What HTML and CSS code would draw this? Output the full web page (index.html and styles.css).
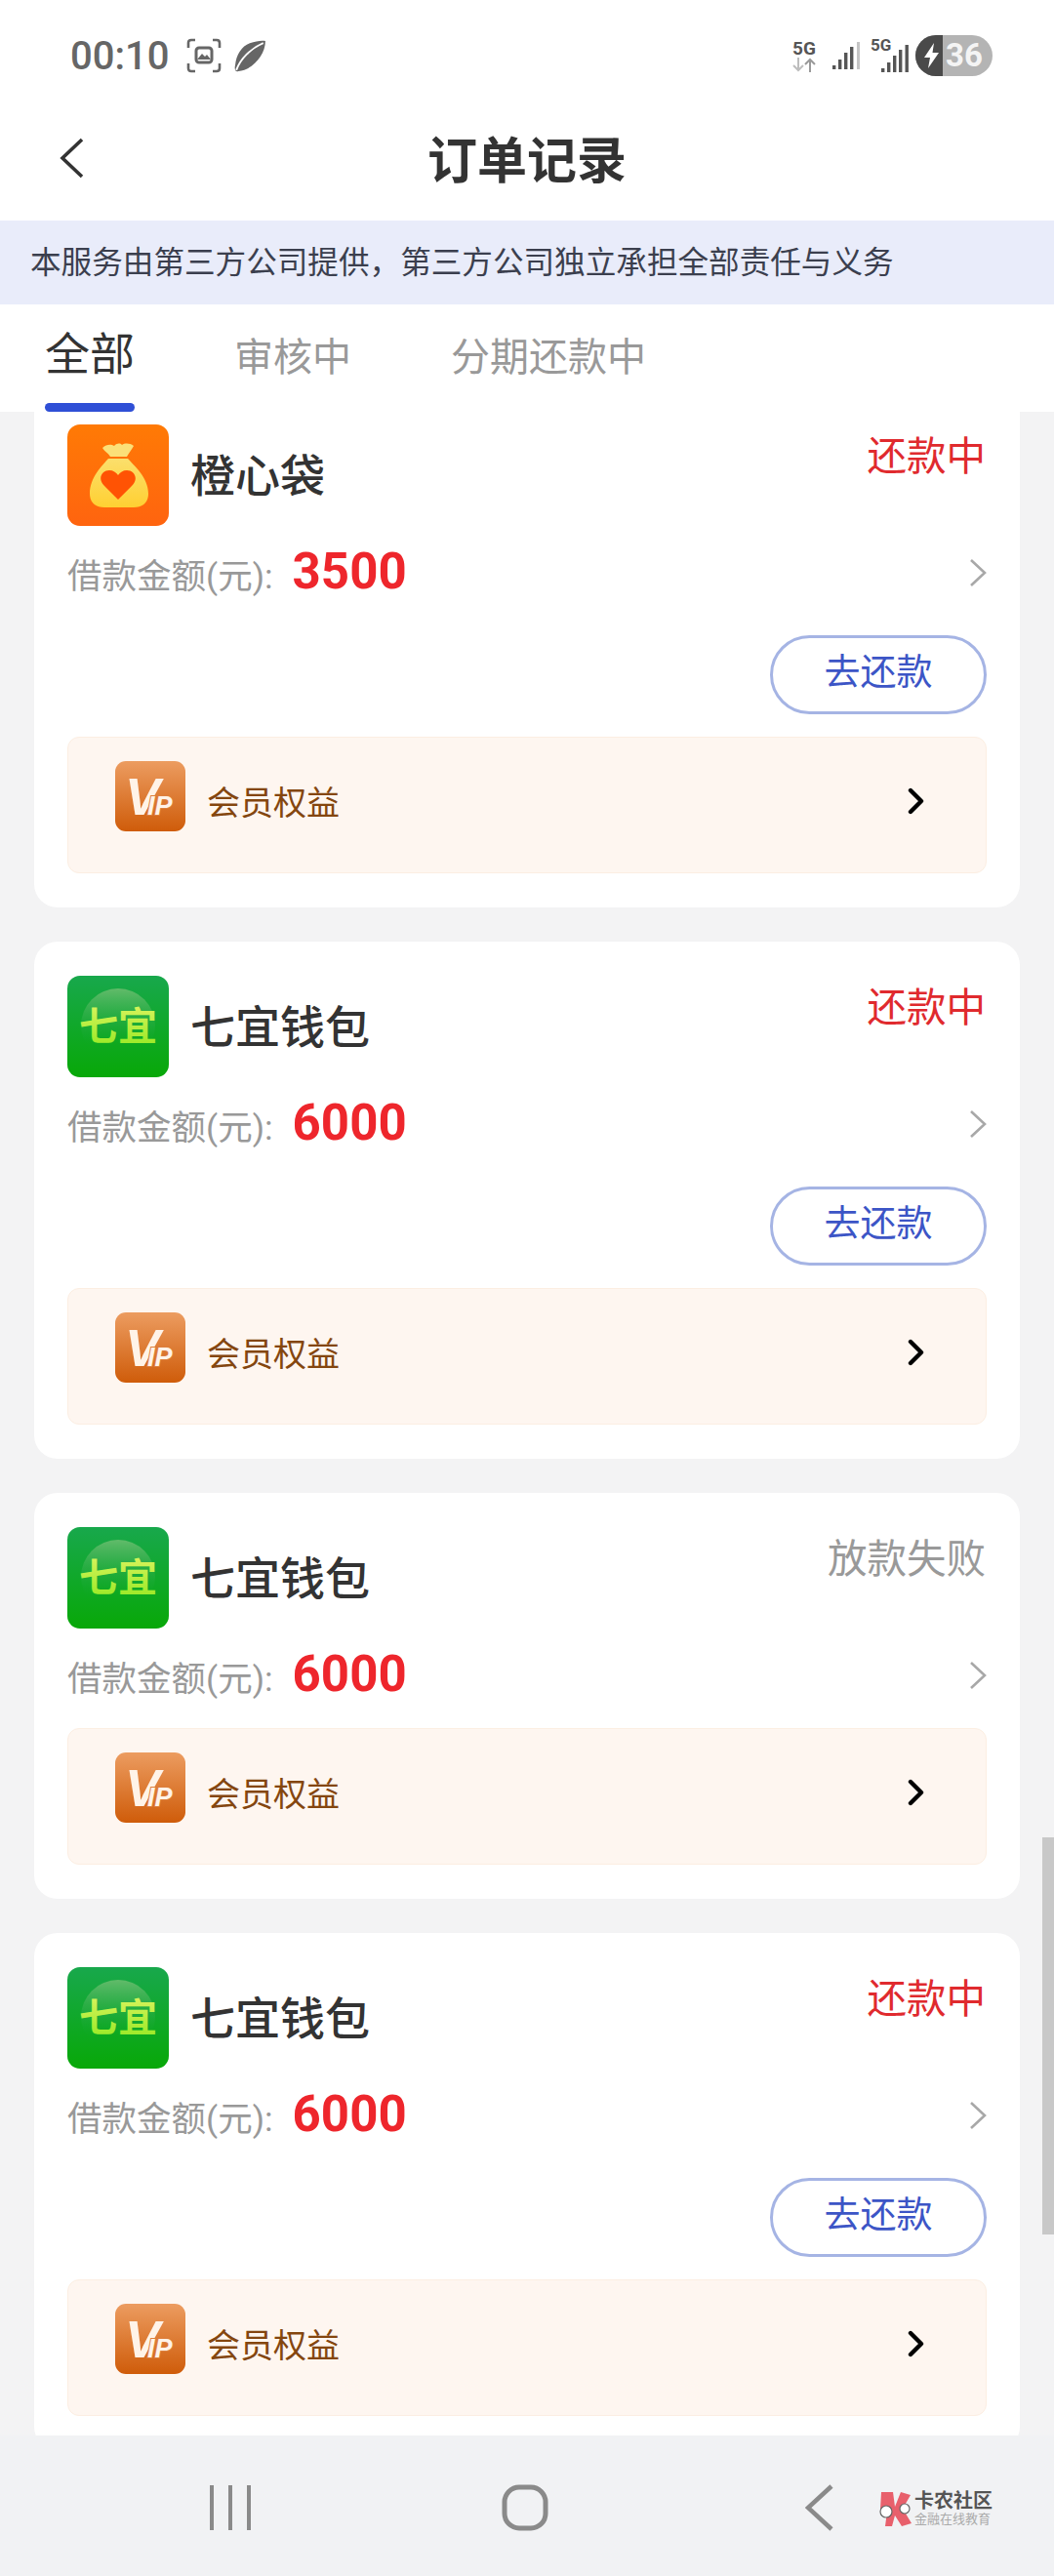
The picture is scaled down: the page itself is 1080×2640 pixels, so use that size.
FILE: index.html
```html
<!DOCTYPE html>
<html lang="zh-CN">
<head>
  <meta charset="UTF-8" />
  <meta name="viewport" content="width=device-width, initial-scale=1.0"/>
  <title>订单记录</title>
  <link rel="stylesheet" href="styles.css">
</head>
<body>

  <svg class="sprites" aria-hidden="true">
    <defs>
      <linearGradient id="bagBg" x1="0" y1="0" x2="0" y2="1">
        <stop offset="0" stop-color="#ff7a05"/>
        <stop offset="1" stop-color="#ff640f"/>
      </linearGradient>
      <linearGradient id="bagBody" x1="0" y1="0" x2="0" y2="1">
        <stop offset="0" stop-color="#fbdf6c"/>
        <stop offset="1" stop-color="#ffd032"/>
      </linearGradient>
      <linearGradient id="qiyiBg" x1="0" y1="0" x2="0" y2="1">
        <stop offset="0" stop-color="#18a84c"/>
        <stop offset="1" stop-color="#08a808"/>
      </linearGradient>
      <linearGradient id="qiyiGlow" x1="0" y1="0" x2="0" y2="1">
        <stop offset="0" stop-color="#62bb6a"/>
        <stop offset=".75" stop-color="#18a83c" stop-opacity="0"/>
      </linearGradient>
      <linearGradient id="qiyiText" x1="0" y1="0" x2="0" y2="1">
        <stop offset="0" stop-color="#e8f56a"/>
        <stop offset="1" stop-color="#90e81e"/>
      </linearGradient>
      <linearGradient id="vipBg" x1="0" y1="0" x2="0" y2="1">
        <stop offset="0" stop-color="#ec9c60"/>
        <stop offset="1" stop-color="#cf5c0a"/>
      </linearGradient>
    </defs>

    <symbol id="icon-bag" viewBox="0 0 104 104">
      <rect width="104" height="104" rx="13" fill="url(#bagBg)"/>
      <path d="M36 24c4-4 9-4 12-2 3-3 6-3 8-1 3-2 8-2 12 1-2 4-5 7-7 11H44c-2-4-6-5-8-9z" fill="#fbe078"/>
      <path d="M42 35h20c6 7 21 19 21 36 0 9-6 14-15 14H38c-9 0-15-5-15-14 0-17 13-29 19-36z" fill="url(#bagBody)"/>
      <path d="M52 77 38 63c-8-8-2-16 5-16 4 0 7 2 9 5 2-3 5-5 9-5 7 0 13 8 5 16z" fill="#ff5304"/>
    </symbol>

    <symbol id="icon-qiyi" viewBox="0 0 104 104">
      <rect width="104" height="104" rx="13" fill="url(#qiyiBg)"/>
      <circle cx="52" cy="51" r="38" fill="url(#qiyiGlow)"/>
    </symbol>

    <symbol id="icon-vip" viewBox="0 0 72 72">
      <rect width="72" height="72" rx="11" fill="url(#vipBg)"/>
    </symbol>

    <symbol id="icon-more" viewBox="0 0 18 30">
      <path d="M2 2l14 13L2 28" fill="none" stroke="#a8a8a8" stroke-width="2.6"/>
    </symbol>

    <symbol id="icon-go" viewBox="0 0 18 28">
      <path d="M3 3l11 11L3 25" fill="none" stroke="#000" stroke-width="4.4" stroke-linecap="round" stroke-linejoin="round"/>
    </symbol>
  </svg>

  <div class="status-bar">
    <div class="status-left">
      <span class="time">00:10</span>
      <svg class="shot-icon" viewBox="0 0 36 36">
        <path d="M9 2H5Q2 2 2 5v5M27 2h4q3 0 3 3v5M9 34H5q-3 0-3-3v-5M27 34h4q3 0 3-3v-5" fill="none" stroke="#666" stroke-width="2.6"/>
        <rect x="10" y="10" width="16" height="15" rx="3" fill="none" stroke="#666" stroke-width="3"/>
        <path d="M11 22l5-6 3 3 2-2 4 5z" fill="#666"/>
      </svg>
      <svg class="leaf-icon" viewBox="0 0 31 31">
        <path d="M30 1C27 0 21 1 15 3 7 6 2 14 1 24c-1 4 0 7 3 6C18 29 30 14 30 1z" fill="#666"/>
        <path d="M2 29C6 18 16 8 28 3" fill="none" stroke="#fff" stroke-width="1.800"/>
      </svg>
    </div>
    <div class="status-right">
      <div class="net">
        <span class="net-label">5G</span>
        <svg class="net-arrows" viewBox="0 0 26 15">
          <path d="M7 0v13M2 8l5 5 5-5" fill="none" stroke="#bdbdbd" stroke-width="2"/>
          <path d="M19 15V2M14 7l5-5 5 5" fill="none" stroke="#9a9a9a" stroke-width="2"/>
        </svg>
      </div>
      <svg class="signal" viewBox="0 0 28 28">
        <rect x="0" y="24" width="3.400" height="4" fill="#555"/>
        <rect x="6" y="18" width="3.400" height="10" fill="#555"/>
        <rect x="12" y="11" width="3.400" height="17" fill="#555"/>
        <rect x="18" y="5" width="3.400" height="23" fill="#555"/>
        <rect x="25" y="0" width="3" height="28" fill="#c4c4c4"/>
      </svg>
      <div class="signal-two">
        <span class="net-label net-label-small">5G</span>
        <svg class="signal signal-small" viewBox="0 0 28 28">
          <rect x="0" y="24" width="3.400" height="4" fill="#555"/>
          <rect x="6" y="18" width="3.400" height="10" fill="#555"/>
          <rect x="12" y="11" width="3.400" height="17" fill="#555"/>
          <rect x="18" y="5" width="3.400" height="23" fill="#555"/>
          <rect x="24.500" y="0" width="3.400" height="28" fill="#555"/>
        </svg>
      </div>
      <div class="battery">
        <div class="battery-bolt">
          <svg viewBox="0 0 16 26">
            <path d="M10 0 0 15h6l-2 11L15 10H8.500z" fill="#fff"/>
          </svg>
        </div>
        <div class="battery-level">36</div>
      </div>
    </div>
  </div>

  <div class="title-bar">
    <svg class="back" viewBox="0 0 25 42">
      <path d="M23 2 3 21l20 19" fill="none" stroke="#333" stroke-width="3.600"/>
    </svg>
    <h1>订单记录</h1>
  </div>

  <div class="notice">本服务由第三方公司提供，第三方公司独立承担全部责任与义务</div>

  <div class="tabs">
    <div class="tab active">全部</div>
    <div class="tab">审核中</div>
    <div class="tab">分期还款中</div>
  </div>

  <main class="list">
    <div class="order">
      <div class="order-head">
        <svg class="app-icon"><use href="#icon-bag"/></svg>
        <div class="app-name">橙心袋</div>
        <div class="status repaying">还款中</div>
      </div>
      <div class="amount-row">
        <span class="amount-label">借款金额(元):</span>
        <span class="amount">3500</span>
        <svg class="more"><use href="#icon-more"/></svg>
      </div>
      <div class="actions"><button class="pay-btn">去还款</button></div>
      <div class="vip-row">
        <svg class="vip-icon" viewBox="0 0 72 72"><use href="#icon-vip"/><text x="10" y="55" class="vip-v">V</text><text x="33" y="55" class="vip-ip">IP</text></svg>
        <span class="vip-text">会员权益</span>
        <svg class="go"><use href="#icon-go"/></svg>
      </div>
    </div>

    <div class="order">
      <div class="order-head">
        <svg class="app-icon" viewBox="0 0 104 104"><use href="#icon-qiyi"/><text x="52" y="66" class="qiyi-text">七宜</text></svg>
        <div class="app-name">七宜钱包</div>
        <div class="status repaying">还款中</div>
      </div>
      <div class="amount-row">
        <span class="amount-label">借款金额(元):</span>
        <span class="amount">6000</span>
        <svg class="more"><use href="#icon-more"/></svg>
      </div>
      <div class="actions"><button class="pay-btn">去还款</button></div>
      <div class="vip-row">
        <svg class="vip-icon" viewBox="0 0 72 72"><use href="#icon-vip"/><text x="10" y="55" class="vip-v">V</text><text x="33" y="55" class="vip-ip">IP</text></svg>
        <span class="vip-text">会员权益</span>
        <svg class="go"><use href="#icon-go"/></svg>
      </div>
    </div>

    <div class="order">
      <div class="order-head">
        <svg class="app-icon" viewBox="0 0 104 104"><use href="#icon-qiyi"/><text x="52" y="66" class="qiyi-text">七宜</text></svg>
        <div class="app-name">七宜钱包</div>
        <div class="status failed">放款失败</div>
      </div>
      <div class="amount-row">
        <span class="amount-label">借款金额(元):</span>
        <span class="amount">6000</span>
        <svg class="more"><use href="#icon-more"/></svg>
      </div>
      <div class="vip-row">
        <svg class="vip-icon" viewBox="0 0 72 72"><use href="#icon-vip"/><text x="10" y="55" class="vip-v">V</text><text x="33" y="55" class="vip-ip">IP</text></svg>
        <span class="vip-text">会员权益</span>
        <svg class="go"><use href="#icon-go"/></svg>
      </div>
    </div>

    <div class="order">
      <div class="order-head">
        <svg class="app-icon" viewBox="0 0 104 104"><use href="#icon-qiyi"/><text x="52" y="66" class="qiyi-text">七宜</text></svg>
        <div class="app-name">七宜钱包</div>
        <div class="status repaying">还款中</div>
      </div>
      <div class="amount-row">
        <span class="amount-label">借款金额(元):</span>
        <span class="amount">6000</span>
        <svg class="more"><use href="#icon-more"/></svg>
      </div>
      <div class="actions"><button class="pay-btn">去还款</button></div>
      <div class="vip-row">
        <svg class="vip-icon" viewBox="0 0 72 72"><use href="#icon-vip"/><text x="10" y="55" class="vip-v">V</text><text x="33" y="55" class="vip-ip">IP</text></svg>
        <span class="vip-text">会员权益</span>
        <svg class="go"><use href="#icon-go"/></svg>
      </div>
    </div>

    <div class="scroll-thumb"></div>
  </main>

  <nav class="nav-bar">
    <div class="nav-slot">
      <svg class="nav-recent" viewBox="0 0 44 46">
        <path d="M3 0v46M22 0v46M41 0v46" fill="none" stroke="#8a8a8a" stroke-width="4"/>
      </svg>
    </div>
    <div class="nav-slot">
      <svg class="nav-home" viewBox="0 0 48 48">
        <rect x="3" y="3" width="42" height="42" rx="15" fill="none" stroke="#8a8a8a" stroke-width="5"/>
      </svg>
    </div>
    <div class="nav-slot">
      <svg class="nav-back" viewBox="0 0 29 48">
        <path d="M27 2 3 24l24 22" fill="none" stroke="#8a8a8a" stroke-width="4.600"/>
      </svg>
    </div>

    <div class="watermark">
      <svg class="wm-logo" viewBox="0 0 36 36">
        <path d="M3 1h12l2 15 6-15 10 3-8 14 9 15-10 3-7-11-3 11H7l2-15-7-2z" fill="#e8606c"/>
        <circle cx="8" cy="21" r="6" fill="#fff" stroke="#666" stroke-width="1.200"/>
        <circle cx="27" cy="18" r="5" fill="#fff" stroke="#666" stroke-width="1.200"/>
      </svg>
      <div class="wm-text">
        <div class="wm-title">卡农社区</div>
        <div class="wm-sub">金融在线教育</div>
      </div>
    </div>
  </nav>

</body>
</html>
```

FILE: styles.css
```css
* {
  box-sizing: border-box;
}

body {
  margin: 0;
  width: 1080px;
  height: 2640px;
  display: flex;
  flex-direction: column;
  overflow: hidden;
  font-family: Roboto, "Noto Sans CJK SC", sans-serif;
  background-color: #fff;
  color: #333;
}

.sprites {
  position: absolute;
  width: 0;
  height: 0;
}

.qiyi-text {
  font-family: "Noto Sans CJK SC", sans-serif;
  font-size: 40px;
  font-weight: 700;
  text-anchor: middle;
  fill: url(#qiyiText);
}

.vip-v {
  font-family: "Liberation Sans", sans-serif;
  font-size: 54px;
  font-weight: 700;
  font-style: italic;
  fill: #fff3e8;
}

.vip-ip {
  font-family: "Liberation Sans", sans-serif;
  font-size: 27px;
  font-weight: 700;
  font-style: italic;
  fill: #fff3e8;
  stroke: #dc7f3e;
  stroke-width: 2px;
  paint-order: stroke;
}

/* status bar */
.status-bar {
  height: 100px;
  padding: 14px 63px 0 72px;
  display: flex;
  align-items: center;
  justify-content: space-between;
}

.status-left {
  display: flex;
  align-items: center;
}

.time {
  font-size: 40px;
  font-weight: 500;
  color: #666;
}

.shot-icon {
  width: 36px;
  height: 36px;
  margin-left: 18px;
}

.leaf-icon {
  width: 33px;
  height: 33px;
  margin-left: 13px;
}

.status-right {
  display: flex;
  align-items: center;
}

.net {
  width: 26px;
  display: flex;
  flex-direction: column;
  align-items: center;
}

.net-label {
  font-size: 19px;
  font-weight: 700;
  line-height: 18px;
  color: #555;
}

.net-arrows {
  width: 26px;
  height: 15px;
}

.signal {
  width: 28px;
  height: 28px;
  margin-left: 16px;
}

.signal-two {
  width: 39px;
  height: 34px;
  margin-left: 11px;
  position: relative;
}

.net-label-small {
  position: absolute;
  left: 0;
  top: -3px;
  font-size: 17px;
}

.signal-small {
  position: absolute;
  right: 0;
  bottom: 0;
  margin: 0;
}

.battery {
  width: 79px;
  height: 42px;
  margin-left: 7px;
  border-radius: 21px;
  overflow: hidden;
  display: flex;
  background-color: #b4b4b4;
}

.battery-bolt {
  width: 28px;
  background-color: #4a4a4a;
  display: flex;
  align-items: center;
  justify-content: center;
  padding-left: 5px;
}

.battery-bolt svg {
  width: 16px;
  height: 26px;
}

.battery-level {
  padding-left: 3px;
  font-size: 33px;
  font-weight: 700;
  line-height: 42px;
  color: #f4f4f4;
}

/* title */
.title-bar {
  height: 126px;
  position: relative;
  display: flex;
  align-items: center;
  justify-content: center;
}

.back {
  position: absolute;
  left: 61px;
  top: 41px;
  width: 25px;
  height: 42px;
}

h1 {
  margin: 0 0 5px 0;
  font-size: 51px;
  font-weight: 700;
  color: #333;
  font-family: "Noto Sans CJK SC", sans-serif;
}

.notice {
  height: 86px;
  padding-left: 31px;
  background-color: #e9ecfa;
  color: #3b3f4e;
  font-size: 31.6px;
  line-height: 88px;
  white-space: nowrap;
}

/* tabs */
.tabs {
  height: 110px;
  padding-left: 46px;
  display: flex;
  gap: 102px;
  background-color: #fff;
  position: relative;
  z-index: 2;
}

.tab {
  position: relative;
  height: 110px;
  line-height: 110px;
  font-size: 40px;
  color: #999;
}

.tab.active {
  font-size: 46px;
  color: #333;
  line-height: 102px;
}

.tab.active::after {
  content: "";
  position: absolute;
  left: 0;
  right: 0;
  bottom: 0;
  height: 9px;
  border-radius: 5px;
  background-color: #2f4fd6;
}

/* order list */
.list {
  flex: 1;
  min-height: 0;
  overflow: hidden;
  position: relative;
  background-color: #f3f3f4;
}

.order {
  width: 1010px;
  margin: 0 0 35px 35px;
  padding: 35px 34px 35px;
  background-color: #fff;
  border-radius: 24px;
}

.order:first-child {
  margin-top: -22px;
}

.order-head {
  height: 104px;
  display: flex;
  align-items: flex-start;
}

.app-icon {
  width: 104px;
  height: 104px;
  flex-shrink: 0;
}

.app-name {
  margin-left: 22px;
  padding-top: 2px;
  font-size: 46px;
  line-height: 102px;
  color: #333;
  font-weight: 500;
}

.status {
  margin-left: auto;
  margin-right: 1px;
  margin-top: 3px;
  font-size: 40.5px;
  line-height: 60px;
}

.status.repaying {
  color: #e02a2e;
}

.status.failed {
  color: #999;
}

.amount-row {
  height: 64px;
  margin-top: 16px;
  display: flex;
  align-items: center;
}

.amount-label {
  font-size: 35.5px;
  color: #999;
}

.amount {
  margin-left: 20px;
  margin-bottom: 3px;
  font-size: 51px;
  font-weight: 700;
  color: #ee262c;
}

.more {
  width: 18px;
  height: 30px;
  margin-left: auto;
}

.actions {
  margin-top: 32px;
  display: flex;
  justify-content: flex-end;
}

.pay-btn {
  width: 222px;
  height: 81px;
  padding: 0 0 11px 0;
  background-color: #fff;
  border: 3px solid #a5b4e4;
  border-radius: 41px;
  font-family: inherit;
  font-size: 37px;
  color: #3c55c6;
}

.vip-row {
  height: 140px;
  margin-top: 22px;
  padding: 0 62px 0 48px;
  display: flex;
  align-items: center;
  background-color: #fef6f0;
  border: 1px solid #fceee2;
  border-radius: 12px;
}

.actions + .vip-row {
  margin-top: 23px;
}

.vip-icon {
  width: 72px;
  height: 72px;
  margin-bottom: 18px;
}

.vip-text {
  margin-left: 22px;
  margin-bottom: 9px;
  font-size: 34px;
  color: #84460f;
}

.go {
  width: 18px;
  height: 28px;
  margin-left: auto;
  margin-bottom: 8px;
}

.scroll-thumb {
  position: absolute;
  right: 0;
  top: 1461px;
  width: 12px;
  height: 407px;
  background-color: #c8c8c8;
}

/* system nav */
.nav-bar {
  height: 144px;
  flex-shrink: 0;
  padding: 4px 5px 0 0;
  position: relative;
  display: flex;
  justify-content: center;
  align-items: center;
  background-color: #f1f2f4;
}

.nav-slot {
  width: 302px;
  display: flex;
  justify-content: center;
}

.nav-recent {
  width: 44px;
  height: 46px;
}

.nav-home {
  width: 48px;
  height: 48px;
}

.nav-back {
  width: 29px;
  height: 48px;
}

.watermark {
  position: absolute;
  left: 900px;
  top: 56px;
  display: flex;
  align-items: center;
}

.wm-logo {
  width: 36px;
  height: 36px;
}

.wm-text {
  margin-left: 1px;
}

.wm-title {
  font-size: 20px;
  line-height: 22px;
  font-weight: 700;
  color: #555;
}

.wm-sub {
  font-size: 13px;
  line-height: 15px;
  color: #aaa;
}
```
